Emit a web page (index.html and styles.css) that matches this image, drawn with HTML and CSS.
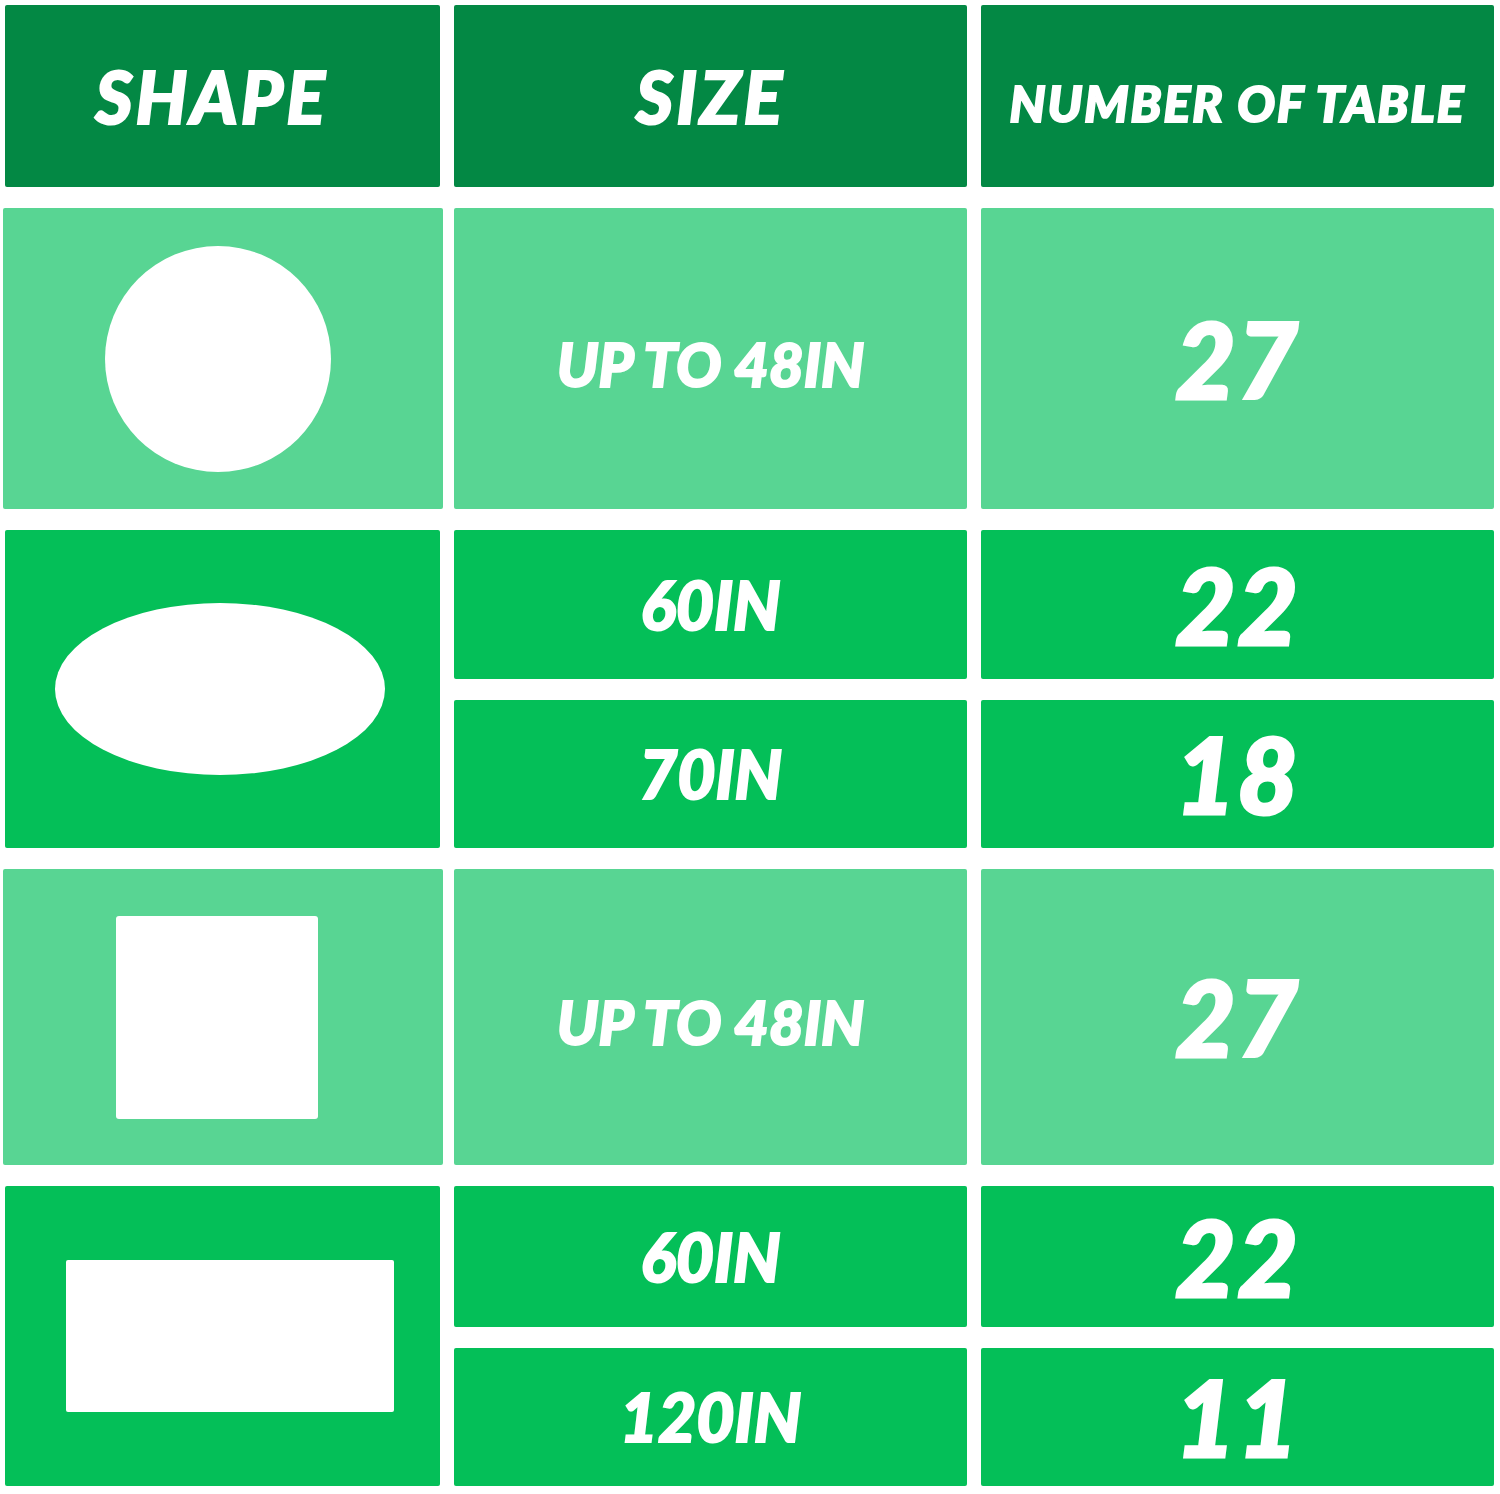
FILE: index.html
```html
<!DOCTYPE html>
<html>
<head>
<meta charset="utf-8">
<link rel="stylesheet" href="styles.css">
</head>
<body>
<div class="table">
  <div class="cell head c1"><span class="h-big">SHAPE</span></div>
  <div class="cell head c2"><span class="h-big">SIZE</span></div>
  <div class="cell head c3"><span class="h-small">NUMBER OF TABLE</span></div>

  <div class="cell light c1 r1"><div class="circle"></div></div>
  <div class="cell light c2 r1"><span class="size-up">UP TO 48IN</span></div>
  <div class="cell light c3 r1"><span class="num">27</span></div>

  <div class="cell mid c1 r2"><div class="ellipse"></div></div>
  <div class="cell mid c2"><span class="size">60IN</span></div>
  <div class="cell mid c3"><span class="num">22</span></div>
  <div class="cell mid c2"><span class="size">70IN</span></div>
  <div class="cell mid c3"><span class="num">18</span></div>

  <div class="cell light c1 r3"><div class="square"></div></div>
  <div class="cell light c2 r3"><span class="size-up">UP TO 48IN</span></div>
  <div class="cell light c3 r3"><span class="num">27</span></div>

  <div class="cell mid c1 r4"><div class="rect"></div></div>
  <div class="cell mid c2"><span class="size">60IN</span></div>
  <div class="cell mid c3"><span class="num">22</span></div>
  <div class="cell mid c2"><span class="size">120IN</span></div>
  <div class="cell mid c3"><span class="num">11</span></div>
</div>
</body>
</html>
```

FILE: styles.css
```css
html, body {
  margin: 0;
  padding: 0;
  background: #ffffff;
}
body {
  width: 1500px;
  height: 1494px;
  overflow: hidden;
}
.table {
  display: grid;
  grid-template-columns: 435px 513px 513px;
  grid-template-rows: 182px 301px 149px 148px 296px 141px 138px;
  column-gap: 14px;
  row-gap: 21px;
  padding: 5px 0 0 5px;
}
.cell {
  display: flex;
  align-items: center;
  justify-content: center;
  color: #ffffff;
  font-family: Lato, "Open Sans", "Liberation Sans", sans-serif;
  font-weight: 900;
  font-style: italic;
  border-radius: 2px;
  -webkit-text-stroke: 2px #ffffff;
}
.c1 { grid-column: 1; }
.c2 { grid-column: 2; }
.c3 { grid-column: 3; }
.r2 { grid-row: 3 / span 2; }
.r4 { grid-row: 6 / span 2; }
.head { background: #038844; }
.light { background: #58d593; }
.mid { background: #04bf58; }
.light.c1 { margin: 0 -3px 0 -2px; }

.h-big {
  font-size: 72px;
  letter-spacing: 3px;
  line-height: 1;
}
.head.c1 .h-big { margin-right: 22px; }
.h-small {
  font-size: 50px;
  letter-spacing: 2px;
  line-height: 1;
  margin-top: 14px;
  white-space: nowrap;
}
.size-up {
  font-size: 60px;
  line-height: 1;
  margin-top: 10px;
  letter-spacing: 0;
}
.size {
  font-size: 66px;
  line-height: 1;
  letter-spacing: 0;
}
.num {
  font-size: 104px;
  line-height: 1;
  letter-spacing: 2px;
  -webkit-text-stroke: 3px #ffffff;
}
.circle {
  width: 226px;
  height: 226px;
  border-radius: 50%;
  background: #ffffff;
  margin-right: 10px;
}
.ellipse {
  width: 330px;
  height: 172px;
  border-radius: 50%;
  background: #ffffff;
  margin-right: 6px;
}
.square {
  width: 202px;
  height: 203px;
  border-radius: 3px;
  background: #ffffff;
  margin-right: 12px;
}
.rect {
  width: 328px;
  height: 152px;
  border-radius: 2px;
  background: #ffffff;
  margin-left: 14px;
}
```
